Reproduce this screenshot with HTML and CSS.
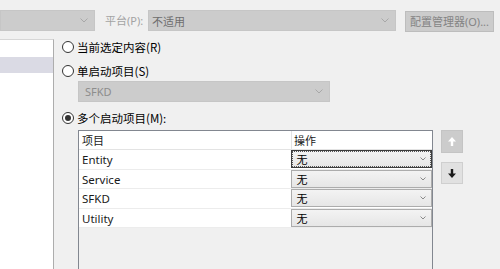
FILE: index.html
```html
<!DOCTYPE html>
<html lang="zh-CN">
<head>
    <meta charset="UTF-8">
    <title>启动项目</title>
    <link rel="stylesheet" href="styles.css">
</head>
<body>
    <div class="toolbar">
        <div class="combo combo-config">
            <svg class="chev" width="8" height="5" viewBox="0 0 8 5"><path d="M0.5 0.5 L4 4 L7.5 0.5" fill="none" stroke="#a8a8a8" stroke-width="1"/></svg>
        </div>
        <span class="label">平台(P):</span>
        <div class="combo combo-platform">
            <span>不适用</span>
            <svg class="chev" width="8" height="5" viewBox="0 0 8 5"><path d="M0.5 0.5 L4 4 L7.5 0.5" fill="none" stroke="#a8a8a8" stroke-width="1"/></svg>
        </div>
        <div class="btn-config">配置管理器(O)...</div>
    </div>

    <div class="main">
        <div class="tree">
            <div class="tree-item selected"></div>
        </div>

        <div class="content">
            <div class="radio-row">
                <span class="radio"></span>
                <span>当前选定内容(R)</span>
            </div>
            <div class="radio-row second">
                <span class="radio"></span>
                <span>单启动项目(S)</span>
            </div>
            <div class="combo combo-single">
                <span>SFKD</span>
                <svg class="chev" width="8" height="5" viewBox="0 0 8 5"><path d="M0.5 0.5 L4 4 L7.5 0.5" fill="none" stroke="#a8a8a8" stroke-width="1"/></svg>
            </div>
            <div class="radio-row third">
                <span class="radio checked"></span>
                <span>多个启动项目(M):</span>
            </div>

            <div class="grid-wrap">
                <div class="grid">
                    <div class="grid-head">
                        <div class="cell-name">项目</div>
                        <div class="cell-op">操作</div>
                    </div>
                    <div class="grid-row">
                        <div class="cell-name">Entity</div>
                        <div class="op-select focused"><span>无</span>
                            <svg class="chev-sm" width="6" height="4" viewBox="0 0 6 4"><path d="M0.5 0.5 L3 3 L5.5 0.5" fill="none" stroke="#8a8a8a" stroke-width="1"/></svg>
                        </div>
                    </div>
                    <div class="grid-row">
                        <div class="cell-name">Service</div>
                        <div class="op-select"><span>无</span>
                            <svg class="chev-sm" width="6" height="4" viewBox="0 0 6 4"><path d="M0.5 0.5 L3 3 L5.5 0.5" fill="none" stroke="#8a8a8a" stroke-width="1"/></svg>
                        </div>
                    </div>
                    <div class="grid-row">
                        <div class="cell-name">SFKD</div>
                        <div class="op-select"><span>无</span>
                            <svg class="chev-sm" width="6" height="4" viewBox="0 0 6 4"><path d="M0.5 0.5 L3 3 L5.5 0.5" fill="none" stroke="#8a8a8a" stroke-width="1"/></svg>
                        </div>
                    </div>
                    <div class="grid-row">
                        <div class="cell-name">Utility</div>
                        <div class="op-select"><span>无</span>
                            <svg class="chev-sm" width="6" height="4" viewBox="0 0 6 4"><path d="M0.5 0.5 L3 3 L5.5 0.5" fill="none" stroke="#8a8a8a" stroke-width="1"/></svg>
                        </div>
                    </div>
                </div>

                <div class="move-btns">
                    <div class="move-btn up">
                        <svg width="10" height="11" viewBox="0 0 10 11"><path d="M5 1 L1 5.5 H3.8 V10 H6.2 V5.5 H9 Z" fill="#ffffff"/></svg>
                    </div>
                    <div class="move-btn down">
                        <svg width="10" height="11" viewBox="0 0 10 11"><path d="M5 10 L1 5.5 H3.8 V1 H6.2 V5.5 H9 Z" fill="#1a1a1a"/></svg>
                    </div>
                </div>
            </div>
        </div>
    </div>
</body>
</html>
```

FILE: styles.css
```css
body {
    margin: 0;
    background: #f0f0f0;
    font-family: "Noto Sans", "Noto Sans CJK SC", sans-serif;
    font-size: 11px;
    color: #1a1a1a;
    overflow: hidden;
    height: 269px;
}
.toolbar {
    display: flex;
    align-items: flex-start;
    padding-top: 10px;
    height: 22px;
}
.combo {
    box-sizing: border-box;
    height: 21px;
    background: #cccccc;
    border: 1px solid #c6c6c6;
    display: flex;
    align-items: center;
    padding: 0 6px;
    color: #6e6e6e;
}
.combo span {
    flex: 1;
}
.chev {
    margin-left: auto;
}
.combo-config {
    width: 95px;
}
.label {
    margin-left: 10px;
    width: 43px;
    line-height: 21px;
    color: #a3a3a3;
}
.combo-platform {
    width: 248px;
    padding-left: 3px;
}
.btn-config {
    box-sizing: border-box;
    margin: 1px 0 0 9px;
    width: 89px;
    height: 21px;
    background: #cccccc;
    border: 1px solid #bdbdbd;
    color: #848484;
    text-align: center;
    line-height: 19px;
}
.main {
    display: flex;
    margin-top: 7px;
    height: 230px;
}
.tree {
    width: 53px;
    background: #ffffff;
    border-top: 1px solid #d6d6d6;
    border-right: 1px solid #adadad;
    padding-top: 17px;
}
.tree-item {
    height: 16px;
}
.tree-item.selected {
    background: #dadae4;
}
.content {
    padding-left: 8px;
    width: 430px;
}
.radio-row {
    display: flex;
    align-items: center;
    height: 16px;
    font-family: "Noto Sans CJK SC", sans-serif;
    font-size: 11.5px;
    color: #000;
}
.radio-row.second {
    margin-top: 8px;
}
.radio-row.third {
    margin-top: 8px;
}
.radio {
    box-sizing: border-box;
    width: 12px;
    height: 12px;
    border: 1px solid #333333;
    border-radius: 50%;
    background: #ffffff;
    margin-right: 3px;
    display: flex;
    align-items: center;
    justify-content: center;
}
.radio.checked::after {
    content: "";
    width: 6px;
    height: 6px;
    border-radius: 50%;
    background: #333333;
}
.combo-single {
    margin: 2px 0 0 16px;
    width: 252px;
    color: #8d8d8d;
}
.grid-wrap {
    display: flex;
    align-items: flex-start;
    margin: 4px 0 0 16px;
}
.grid {
    box-sizing: border-box;
    width: 355px;
    height: 139px;
    border: 1px solid #828790;
    border-bottom: none;
    background: #f0f0f0;
}
.grid-head {
    display: flex;
    height: 18px;
    background: #ffffff;
    border-bottom: 1px solid #e3e3e3;
    font-family: "Noto Sans CJK SC", sans-serif;
}
.grid-head .cell-name {
    width: 209px;
    border-right: 1px solid #e3e3e3;
    line-height: 18px;
}
.grid-head .cell-op {
    padding-left: 2px;
    line-height: 18px;
}
.cell-name {
    padding-left: 3px;
}
.grid-row {
    display: flex;
    align-items: center;
    height: 19.5px;
    background: #ffffff;
    box-shadow: inset 0 -1px 0 #ececec;
}
.grid-row .cell-name {
    width: 210px;
    font-size: 11.5px;
}
.op-select {
    box-sizing: border-box;
    width: 141px;
    height: 18px;
    margin-top: -1px;
    display: flex;
    align-items: center;
    padding: 0 5px 0 4px;
    border: 1px solid #acacac;
    background: linear-gradient(#f3f3f3, #e6e6e6);
    font-family: "Noto Sans CJK SC", sans-serif;
    color: #000;
}
.op-select span {
    flex: 1;
}
.op-select.focused {
    border-color: #3c3c3c;
    outline: 1px dotted #555555;
    outline-offset: -2px;
}
.move-btns {
    display: flex;
    flex-direction: column;
    margin-left: 8px;
}
.move-btn {
    box-sizing: border-box;
    width: 22px;
    display: flex;
    align-items: center;
    justify-content: center;
}
.move-btn.up {
    height: 23px;
    background: #cccccc;
    border: 1px solid #c4c4c4;
}
.move-btn.down {
    height: 22px;
    margin-top: 9px;
    background: #e1e1e1;
    border: 1px solid #cfcfcf;
}
```
